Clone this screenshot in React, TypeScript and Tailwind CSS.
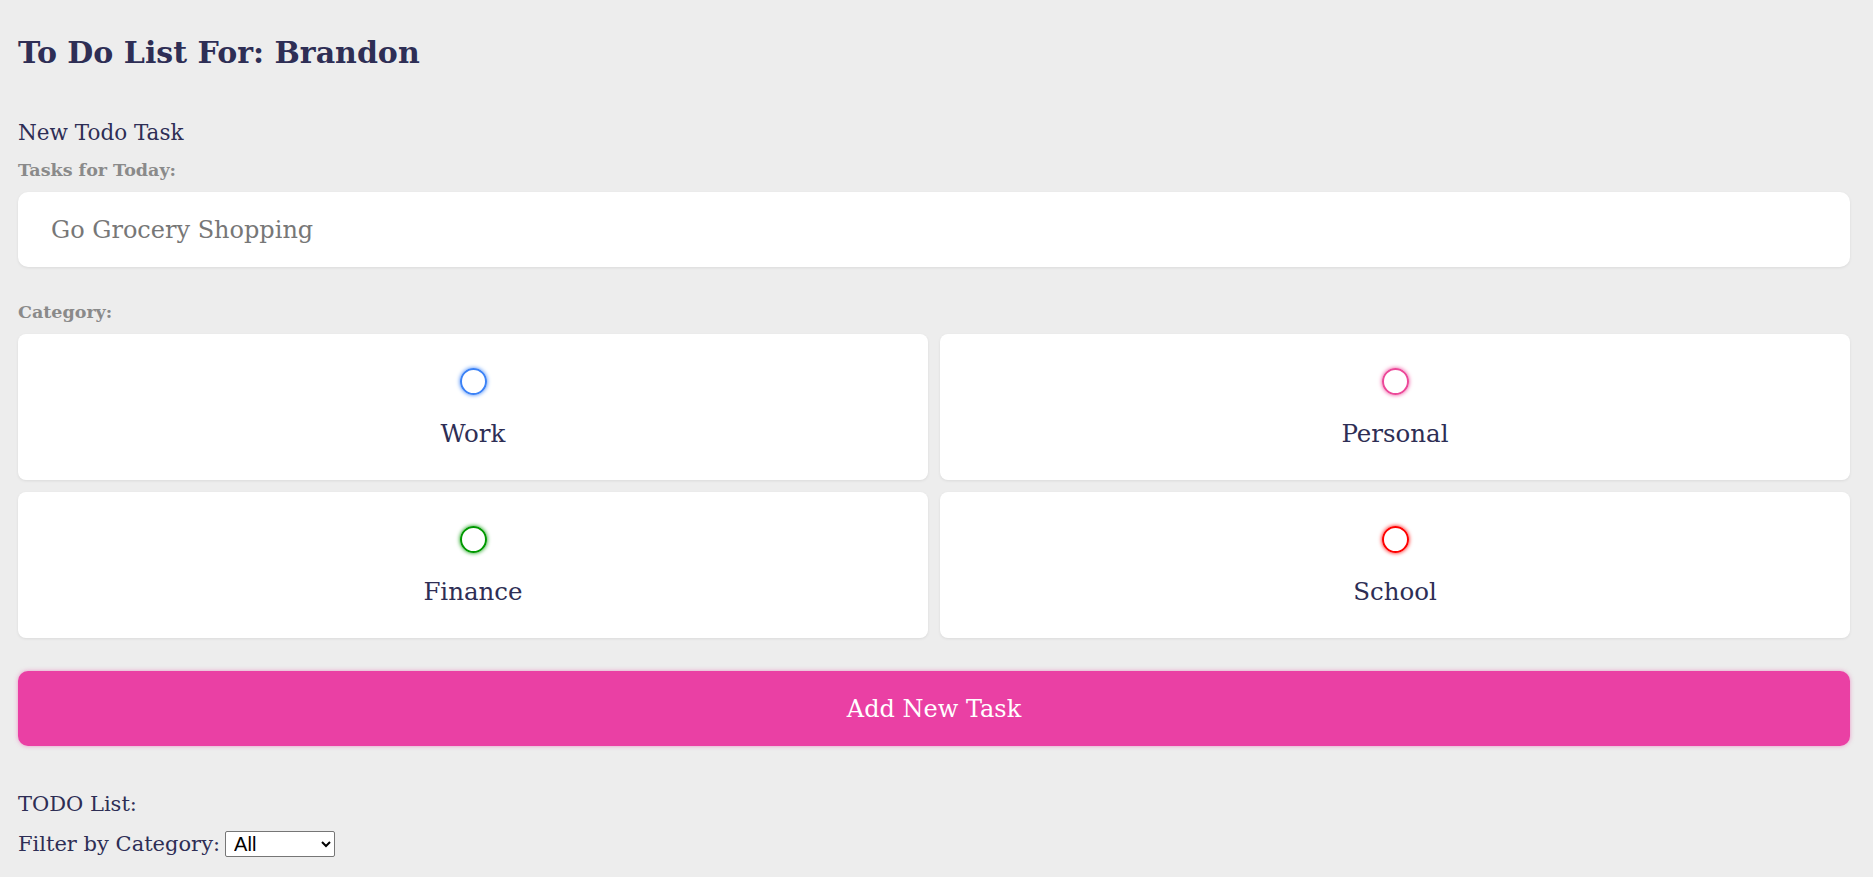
import { useState } from 'react';

const CATEGORIES = [
  { name: 'Work', ring: 'border-[#3b82f6] shadow-[0_0_4px_#3b82f6]' },
  { name: 'Personal', ring: 'border-[#ec4899] shadow-[0_0_4px_#ec4899]' },
  { name: 'Finance', ring: 'border-[#009900] shadow-[0_0_4px_#009900]' },
  { name: 'School', ring: 'border-[#ff0000] shadow-[0_0_4px_#ff0000]' },
];

export default function App() {
  const [task, setTask] = useState('');
  const [category, setCategory] = useState('');
  const [filter, setFilter] = useState('all');

  return (
    <div className="min-h-screen bg-[#ededed] pl-[18px] pr-[23px] pt-[33px] pb-8 text-[#2e2e55] font-['DejaVu_Serif',serif]">
      <h1 className="text-[30px] leading-[40px] font-bold">To Do List For: Brandon</h1>

      <div className="mt-[46px] text-[21.5px] leading-[28px]">New Todo Task</div>
      <div className="mt-[12px] text-[17.5px] leading-[22px] font-bold text-[#8a8a8a]">Tasks for Today:</div>
      <input
        value={task}
        onChange={(e) => setTask(e.target.value)}
        placeholder="Go Grocery Shopping"
        className="mt-[11px] block w-full h-[75px] rounded-[10px] bg-white pl-[33px] text-[24px] text-[#555] placeholder:text-[#777] outline-none shadow-[0_1px_3px_rgba(0,0,0,0.08)]"
      />

      <div className="mt-[34px] text-[17.5px] leading-[22px] font-bold text-[#8a8a8a]">Category:</div>
      <div className="mt-[11px] grid grid-cols-2 gap-[12px]">
        {CATEGORIES.map((c) => (
          <label
            key={c.name}
            onClick={() => setCategory(c.name)}
            className="h-[146px] flex flex-col items-center pt-[34px] bg-white rounded-[8px] shadow-[0_1px_3px_rgba(0,0,0,0.08)] cursor-pointer"
          >
            <span className={`block w-[27px] h-[27px] rounded-full border-2 ${c.ring} ${category === c.name ? 'bg-current' : ''}`} />
            <span className="mt-[24px] text-[24.5px] leading-[30px]">{c.name}</span>
          </label>
        ))}
      </div>

      <button className="mt-[33px] block w-full h-[75px] rounded-[10px] bg-[#ea40a4] text-white text-[24px] shadow-[0_0_4px_rgba(234,64,164,0.5)]">
        Add New Task
      </button>

      <div className="mt-[44px] text-[21px] leading-[28px]">TODO List:</div>
      <div className="mt-[12px] flex items-center gap-[5px] text-[21px] leading-[28px]">
        <span>Filter by Category:</span>
        <select
          value={filter}
          onChange={(e) => setFilter(e.target.value)}
          className="w-[110px] h-[26px] border border-[#767676] bg-white text-black text-[20px] font-['Liberation_Sans',sans-serif] pl-[4px] rounded-[2px]"
        >
          <option value="all">All</option>
          <option value="work">Work</option>
          <option value="personal">Personal</option>
          <option value="finance">Finance</option>
          <option value="school">School</option>
        </select>
      </div>
    </div>
  );
}
